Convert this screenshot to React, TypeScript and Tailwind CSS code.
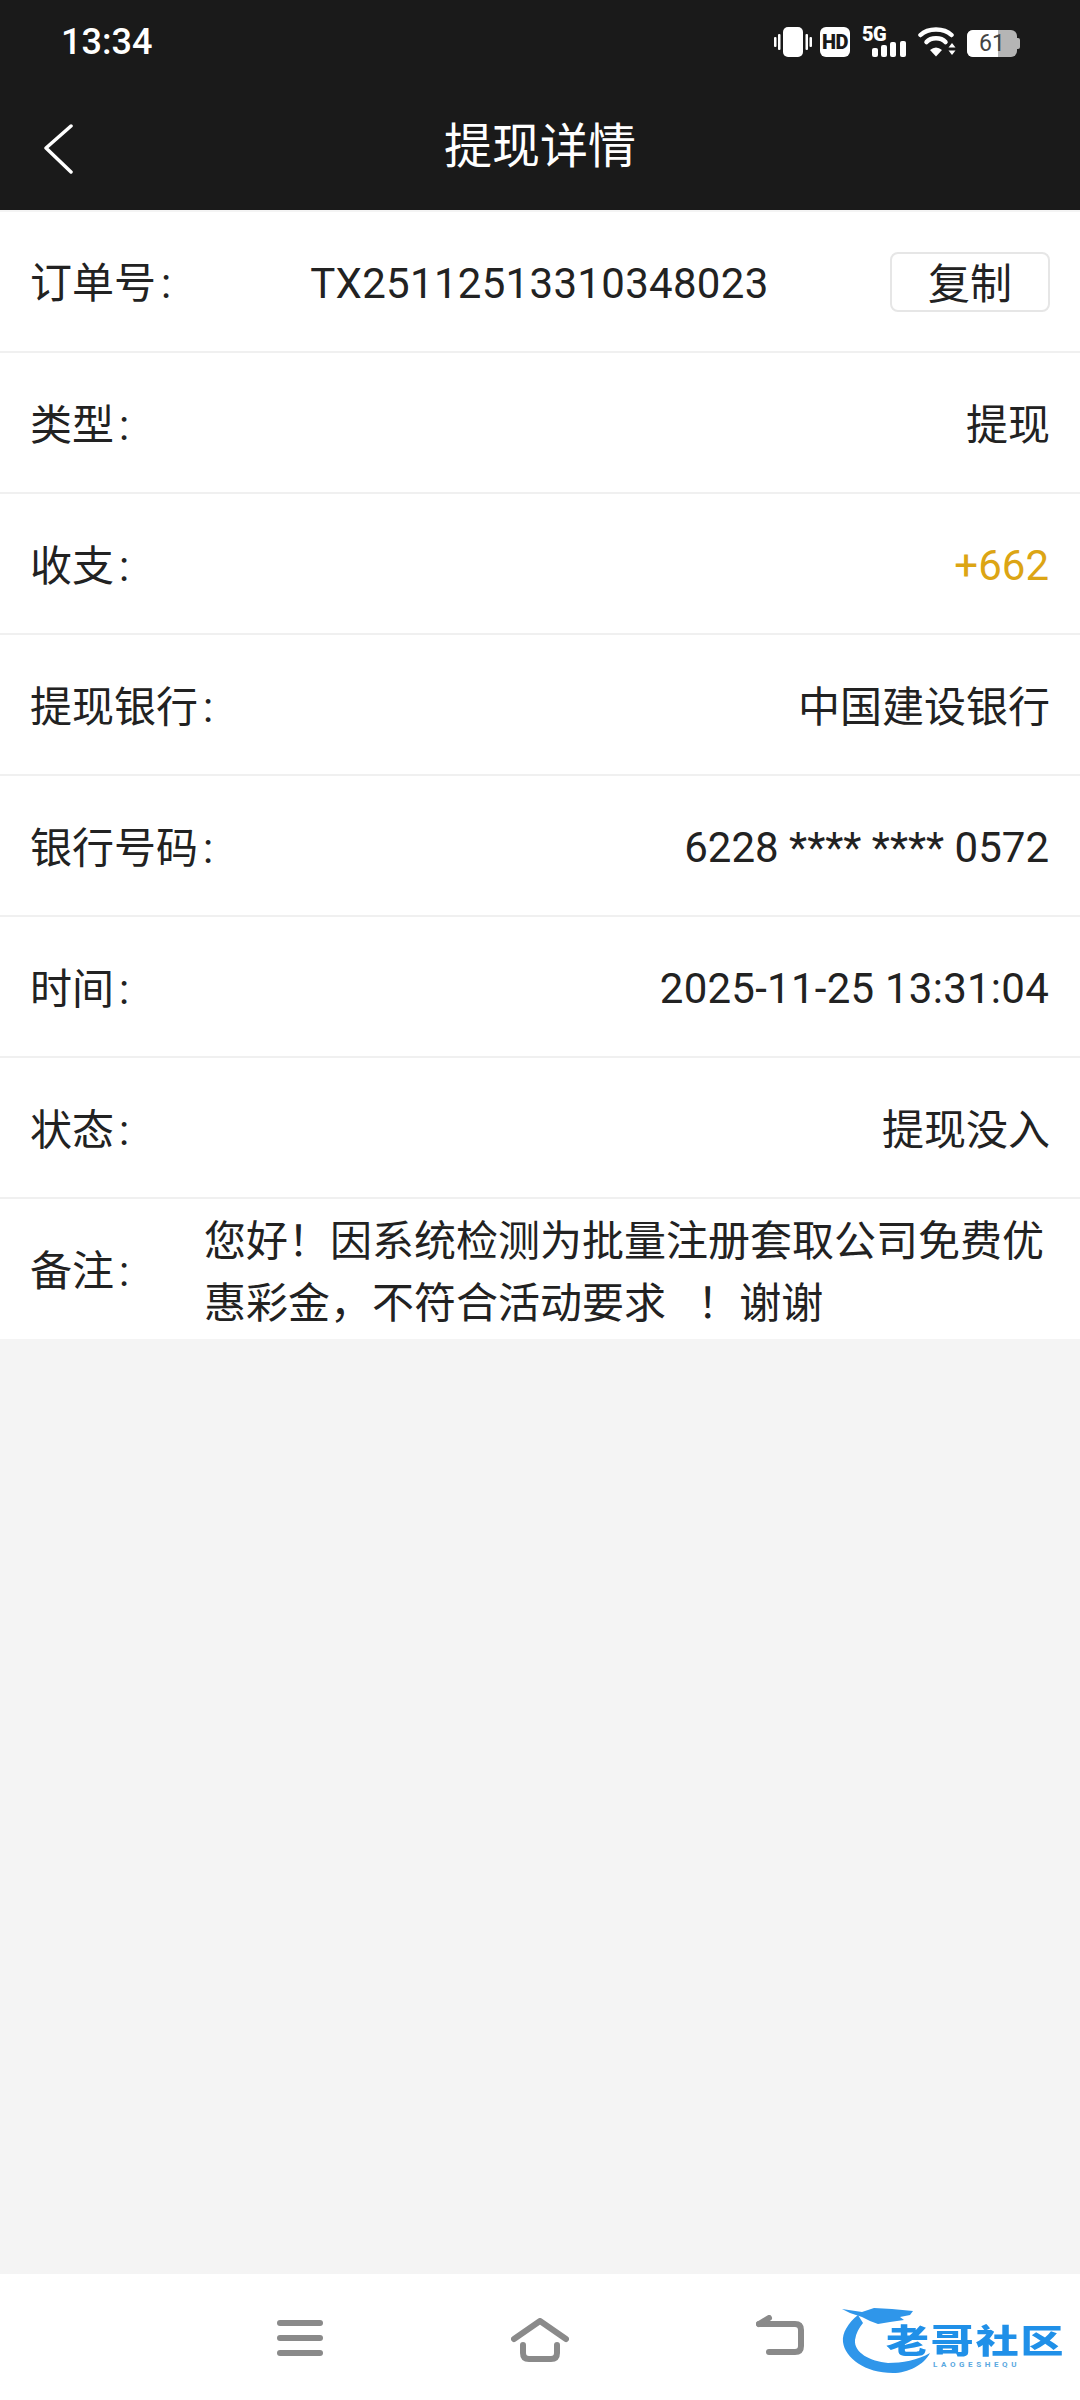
import React from "react";

const FONT = "font-['Roboto','Noto_Sans_CJK_SC',sans-serif]";

function Label({ text, className = "" }: { text: string; className?: string }) {
  return (
    <span className={`pt-[2px] text-[#222222] ${className}`}>
      {text}
      <span className="ml-[5px]">:</span>
    </span>
  );
}

function Row({ label, value, valueClass = "pt-[2px] text-[#222222]" }: { label: string; value: string; valueClass?: string }) {
  return (
    <div className="flex h-[141px] items-center justify-between border-b-2 border-[#f0f0f0] bg-white pl-[30px] pr-[30px] pt-[4px]">
      <Label text={label} />
      <span className={valueClass}>{value}</span>
    </div>
  );
}

function StatusIcons() {
  return (
    <div className="flex items-end">
      <svg width="38" height="30" viewBox="0 0 38 30" fill="#fff" className="mr-[8px]">
        <rect x="9" y="0" width="20" height="30" rx="5" />
        <rect x="0" y="10" width="2.5" height="10" rx="1" />
        <rect x="4" y="7" width="2.5" height="16" rx="1" />
        <rect x="31.5" y="7" width="2.5" height="16" rx="1" />
        <rect x="35.5" y="10" width="2.5" height="10" rx="1" />
      </svg>
      <div className="mr-[12px] flex h-[30px] w-[30px] items-center justify-center rounded-[6px] bg-white font-['Roboto',sans-serif] text-[20px] font-black leading-none tracking-[-0.5px] text-[#1a1a1a]">
        HD
      </div>
      <div className="relative mr-[12px] h-[30px] w-[44px]">
        <span className="absolute left-0 top-[-3px] font-['Roboto',sans-serif] text-[20px] font-black leading-[20px] tracking-[-0.5px] text-white">5G</span>
        <svg width="44" height="30" viewBox="0 0 44 30" fill="#fff" className="absolute left-0 top-0">
          <rect x="10" y="21" width="6" height="9" rx="2" />
          <rect x="19" y="18" width="6" height="12" rx="2" />
          <rect x="28" y="15" width="6" height="15" rx="2" />
          <rect x="38" y="14" width="6" height="16" rx="2" />
        </svg>
      </div>
      <svg width="38" height="30" viewBox="0 0 38 30" fill="none" className="mr-[11px]">
        <path d="M2.5 8 C 10 0.5, 26 0.5, 33.5 8" stroke="#fff" strokeWidth="4.5" strokeLinecap="round" />
        <path d="M8.5 15 C 13 10, 23 10, 27.5 15" stroke="#fff" strokeWidth="4.5" strokeLinecap="round" />
        <path d="M12 23 Q18 18 24 23 L18 29.5 Z" fill="#fff" />
        <path d="M30.5 20.5 L34 16 L37.5 20.5 Z" fill="#fff" />
        <path d="M30.5 23.5 L37.5 23.5 L34 28 Z" fill="#fff" />
      </svg>
      <div className="flex items-center">
        <div className="relative flex h-[27px] w-[50px] items-center justify-center overflow-hidden rounded-[6px] bg-[#b5b5b5]">
          <div className="absolute inset-y-0 left-0 w-[31px] bg-white" />
          <span className="relative font-['Roboto',sans-serif] text-[23px] leading-none text-[#444444]">61</span>
        </div>
        <div className="h-[11px] w-[3px] rounded-r-[2px] bg-[#b5b5b5]" />
      </div>
    </div>
  );
}

function Logo() {
  return (
    <div className="absolute left-[840px] top-[29px] h-[78px] w-[230px]">
      <svg width="92" height="76" viewBox="0 0 92 76" fill="none" className="absolute left-0 top-0 blur-[0.4px]">
        <path d="M18 12 C 8 20, 2 30, 3 39 C 5 55, 25 70, 53 70 C 68 70, 84 62, 90 50 C 78 57, 62 60, 48 60 C 30 58, 14 50, 15 37 C 16 30, 19 25, 23 20 Z" fill="#2f96ea" />
        <path d="M2 6 L22 9 L34 5 L52 6 L73 8 L70 12 L60 14 L64 17 L50 19 L38 21 L30 18 L22 14 L10 10 Z" fill="#2f96ea" />
      </svg>
      <span className="absolute left-[46px] top-[22px] origin-left scale-x-[1.3] whitespace-nowrap text-[33px] font-black leading-none tracking-[1.5px] text-[#2090e8]">老哥社区</span>
      <span className="absolute left-[93px] top-[58px] whitespace-nowrap text-[8px] font-bold leading-none tracking-[3.6px] text-[#5aa8e0]">LAOGESHEQU</span>
    </div>
  );
}

export default function App() {
  return (
    <div className={`flex h-[2400px] w-[1080px] flex-col bg-[#f4f4f4] text-[42px] leading-none ${FONT}`}>
      <header className="bg-[#1a1a1a] text-white">
        <div className="flex h-[84px] items-center justify-between pl-[61px] pr-[60px]">
          <span className="text-[36px] font-medium">13:34</span>
          <StatusIcons />
        </div>
        <div className="relative flex h-[126px] items-center justify-center">
          <svg width="30" height="50" viewBox="0 0 30 50" fill="none" className="absolute left-[44px] top-[40px]">
            <path d="M27 2 L2 24 L27 48" stroke="#fff" strokeWidth="3.5" strokeLinecap="round" strokeLinejoin="round" />
          </svg>
          <span className="text-[48px]">提现详情</span>
        </div>
      </header>

      <main className="mt-[2px] bg-white">
        <div className="flex h-[141px] items-center border-b-2 border-[#f0f0f0] pl-[30px] pr-[30px]">
          <Label text="订单号" className="pt-[4px]" />
          <span className="ml-[139px] flex-1 pt-[4px] tracking-[0.3px] text-[#222222]">TX25112513310348023</span>
          <span className="flex h-[60px] w-[160px] items-center justify-center rounded-[8px] border-2 border-[#e6e6e6] pt-[7px] text-[#222222]">复制</span>
        </div>
        <Row label="类型" value="提现" />
        <Row label="收支" value="+662" valueClass="mr-[1px] text-[#dca514]" />
        <Row label="提现银行" value="中国建设银行" />
        <Row label="银行号码" value="6228 **** **** 0572" valueClass="mr-[1px] text-[#222222]" />
        <Row label="时间" value="2025-11-25 13:31:04" valueClass="mr-[1px] tracking-[0.25px] text-[#222222]" />
        <Row label="状态" value="提现没入" />
        <div className="flex h-[140px] items-center pl-[30px] pr-[30px] pt-[4px]">
          <Label text="备注" className="w-[174px] shrink-0" />
          <p className="pt-[3px] leading-[62px] text-[#222222]">{"您好\uFF01因系统检测为批量注册套取公司免费优惠彩金\uFF0C不符合活动要求\u00A0\u00A0\u00A0\uFF01谢谢"}</p>
        </div>
      </main>

      <div className="flex-1" />

      <footer className="relative grid h-[126px] grid-cols-3 bg-white px-[180px]">
        <div className="flex items-center justify-center">
          <svg width="46" height="36" viewBox="0 0 46 36" fill="#8a8a8a" className="mb-[-2px]">
            <rect x="0" y="0" width="46" height="6" rx="3" />
            <rect x="0" y="15" width="46" height="6" rx="3" />
            <rect x="0" y="30" width="46" height="6" rx="3" />
          </svg>
        </div>
        <div className="flex items-center justify-center">
          <svg width="58" height="44" viewBox="0 0 58 44" fill="none" stroke="#8a8a8a" strokeWidth="6" strokeLinecap="round" strokeLinejoin="round" className="mb-[-6px]">
            <path d="M3 21 L29 3 L55 21" />
            <path d="M12 27 V35 Q12 41 18 41 H40 Q46 41 46 35 V27" />
          </svg>
        </div>
        <div className="flex items-center justify-center">
          <svg width="48" height="40" viewBox="0 0 48 40" fill="none" stroke="#8a8a8a" strokeWidth="6" strokeLinecap="round" strokeLinejoin="round" className="mb-[4px]">
            <path d="M3 9 H39 Q45 9 45 15 V31 Q45 37 39 37 H13" />
            <path d="M3 9 L13 3" />
          </svg>
        </div>
        <Logo />
      </footer>
    </div>
  );
}
